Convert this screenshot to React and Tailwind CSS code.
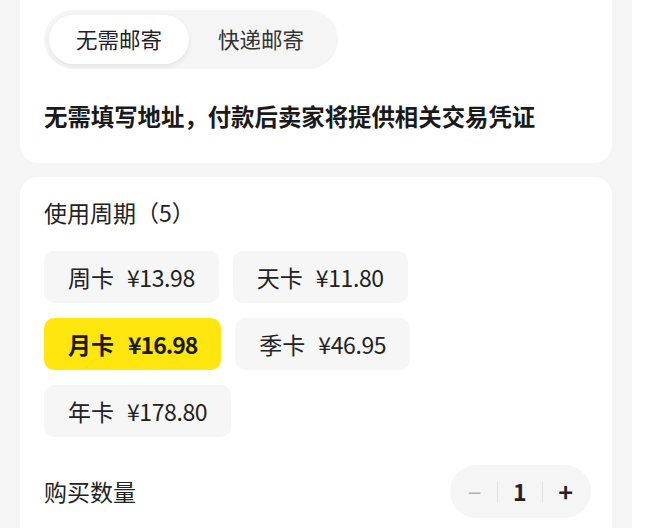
import React from "react";

const F = { fontFamily: '"Noto Sans CJK SC", "Noto Sans", sans-serif' };

function Chip({ name, price, active }) {
  return (
    <div
      className={
        "h-[52px] flex items-center px-[24px] rounded-[10px] text-[23px] " +
        (active ? "bg-[#ffe60f] font-bold text-[#1a1a1a]" : "bg-[#f6f6f6] text-[#222]")
      }
    >
      <span>{name}</span>
      <span className={active ? "ml-[14px] tracking-[-1px]" : "ml-[13px] tracking-[-0.4px]"}>{price}</span>
    </div>
  );
}

export default function App() {
  return (
    <div className="w-[658px] h-[528px] bg-white overflow-hidden" style={F}>
      <div className="w-[632px] h-[528px] bg-[#f5f5f5] px-[20px] flex flex-col">
        <div className="bg-white rounded-b-[18px] pl-[24px] pt-[10px] pb-[31px]">
          <div className="w-[294px] h-[59px] rounded-full bg-[#f5f5f5] p-[5px] flex items-center">
            <div className="w-[140px] h-[49px] rounded-full bg-white shadow-[0_2px_5px_rgba(0,0,0,0.08)] flex items-center justify-center text-[21.5px] text-[#222]">
              无需邮寄
            </div>
            <div className="flex-1 flex items-center justify-center text-[21.5px] text-[#333]">
              快递邮寄
            </div>
          </div>
          <div className="mt-[31px] text-[23.4px] font-bold text-[#1a1a1a] leading-[32px]">
            无需填写地址，付款后卖家将提供相关交易凭证
          </div>
        </div>

        <div className="mt-[14px] bg-white rounded-t-[18px] pl-[24px] pr-[21px] pt-[19px] flex-1">
          <div className="text-[23px] text-[#222] leading-[32px]">使用周期（5）</div>
          <div className="mt-[23px] flex flex-col gap-[15px]">
            <div className="flex gap-[14px]">
              <Chip name="周卡" price="¥13.98" />
              <Chip name="天卡" price="¥11.80" />
            </div>
            <div className="flex gap-[14px]">
              <Chip name="月卡" price="¥16.98" active />
              <Chip name="季卡" price="¥46.95" />
            </div>
            <div className="flex gap-[14px]">
              <Chip name="年卡" price="¥178.80" />
            </div>
          </div>
          <div className="mt-[28px] flex items-center justify-between">
            <div className="text-[23px] text-[#222]">购买数量</div>
            <div className="w-[141px] h-[53px] rounded-full bg-[#f5f5f5] flex items-center justify-between px-[18px]">
              <span className="text-[24px] text-[#b0b0b0] leading-none">−</span>
              <span className="w-px h-[20px] bg-[#e2e2e2]" />
              <span className="text-[23px] font-bold text-[#222] leading-none">1</span>
              <span className="w-px h-[20px] bg-[#e2e2e2]" />
              <span className="text-[25px] font-bold text-[#222] leading-none">+</span>
            </div>
          </div>
        </div>
      </div>
    </div>
  );
}
